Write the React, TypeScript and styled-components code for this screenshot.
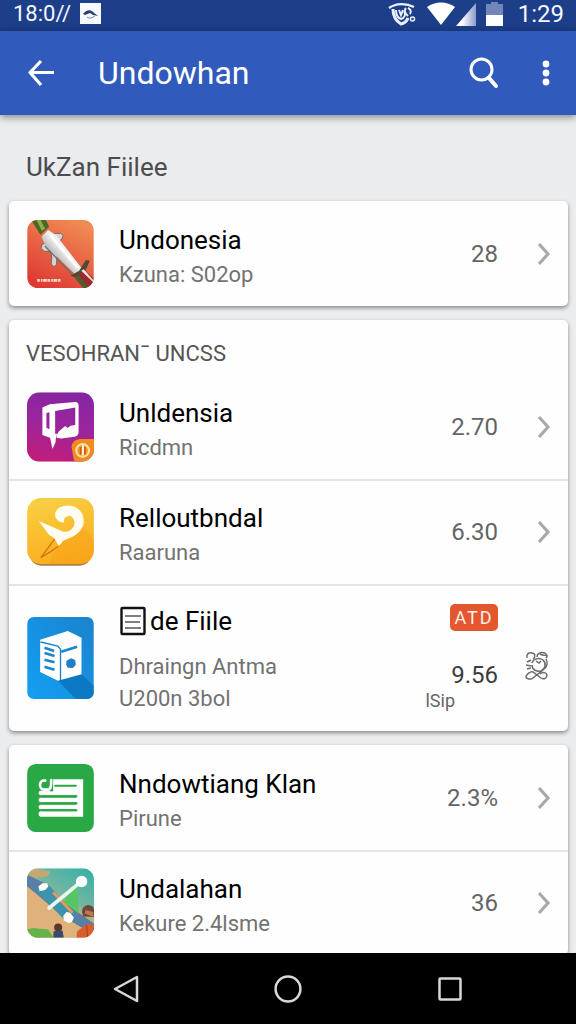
import React from 'react';
import styled, { createGlobalStyle } from 'styled-components';

const GlobalStyle = createGlobalStyle`
  * { box-sizing: border-box; }
  body { margin: 0; background: #ebecee; font-family: Roboto, 'Liberation Sans', sans-serif; }
  h1, h2, h3, p, ul { margin: 0; padding: 0; font-weight: 400; }
  ul { list-style: none; }
  svg { display: block; flex: none; }
`;

const Screen = styled.div`
  height: 100vh;
  display: flex;
  flex-direction: column;
  background: #ebecee;
`;

const StatusBar = styled.div`
  flex: none;
  height: 31px;
  padding: 0 12px 4px 13px;
  display: flex;
  align-items: center;
  justify-content: space-between;
  background: #1d3f8a;
  color: #f4f7ff;
  font-size: 24px;
  line-height: 26px;
`;

const StatusGroup = styled.div<{ $gap: number }>`
  display: flex;
  align-items: center;
  gap: ${(p) => p.$gap}px;
`;

const Elapsed = styled.span`
  font-size: 22px;
`;

const AppBar = styled.header`
  flex: none;
  position: relative;
  z-index: 1;
  height: 84px;
  padding: 0 16px 0 20px;
  display: flex;
  align-items: center;
  background: #305abb;
  color: #fff;
  box-shadow: 0 2px 8px rgba(0, 0, 0, 0.45);
`;

const IconButton = styled.button<{ $width: number }>`
  width: ${(p) => p.$width}px;
  height: 48px;
  padding: 0;
  border: 0;
  background: none;
  color: inherit;
  display: flex;
  align-items: center;
  justify-content: center;
  cursor: pointer;
`;

const AppTitle = styled.h1`
  flex: 1;
  padding-left: 36px;
  font-size: 32px;
  line-height: 40px;
`;

const Actions = styled.div`
  display: flex;
  gap: 24px;
`;

const Content = styled.main`
  flex: 1;
  min-height: 0;
  overflow-y: auto;
  scrollbar-width: none;
  padding: 32px 8px 0 9px;
`;

const SectionTitle = styled.h2`
  padding: 0 17px;
  margin-bottom: 14px;
  color: #4b4c4e;
  font-size: 26px;
  line-height: 40px;
`;

const Card = styled.section`
  margin-bottom: 14px;
  border-radius: 5px;
  background: #fefefe;
  box-shadow: 0 2px 4px rgba(0, 0, 0, 0.42);
`;

const CardHeading = styled.h3`
  padding: 16px 17px 0;
  height: 54px;
  color: #555;
  font-size: 22px;
  line-height: 36px;
`;

const Item = styled.li`
  & + & { box-shadow: inset 0 2px #e4e4e5; }
`;

const Row = styled.a<{ $tall?: boolean }>`
  min-height: ${(p) => (p.$tall ? 147 : 105)}px;
  padding: 0 17px 0 18px;
  display: flex;
  align-items: center;
  color: inherit;
  text-decoration: none;
`;

const Labels = styled.div<{ $tall?: boolean }>`
  flex: 1;
  min-width: 0;
  padding-top: ${(p) => (p.$tall ? 2 : 6)}px;
  padding-left: 25px;
`;

const Title = styled.p<{ $tall?: boolean }>`
  display: flex;
  align-items: center;
  gap: 3px;
  margin-bottom: ${(p) => (p.$tall ? 12 : 0)}px;
  color: #000;
  font-size: 26px;
  line-height: 36px;
  white-space: nowrap;
`;

const Subtitle = styled.p<{ $tall?: boolean }>`
  color: #727272;
  font-size: 22px;
  line-height: ${(p) => (p.$tall ? 32 : 34)}px;
  white-space: nowrap;
`;

const Value = styled.span<{ $dark?: boolean }>`
  color: ${(p) => (p.$dark ? '#3c3c3c' : '#646464')};
  font-size: 24px;
  line-height: 32px;
`;

const Trailing = styled.span<{ $tall?: boolean }>`
  width: 53px;
  padding-top: ${(p) => (p.$tall ? 16 : 0)}px;
  padding-right: ${(p) => (p.$tall ? 2 : 0)}px;
  display: flex;
  justify-content: flex-end;
`;

const Details = styled.div`
  align-self: stretch;
  padding-top: 20px;
  display: flex;
  flex-direction: column;
  align-items: flex-end;
`;

const Badge = styled.span`
  width: 48px;
  margin-bottom: 28px;
  border-radius: 5px;
  background: #e4572e;
  color: #fff0e8;
  font-size: 18px;
  line-height: 27px;
  letter-spacing: 2px;
  text-align: center;
`;

const Note = styled.span`
  padding-right: 43px;
  color: #666;
  font-size: 18px;
  line-height: 20px;
`;

const NavBar = styled.nav`
  flex: none;
  height: 71px;
  padding: 0 45px;
  display: flex;
  align-items: center;
  background: #000;
  color: #d8d8d8;
`;

const NavButton = styled(IconButton)`
  flex: 1;
`;

const PhotoIcon = () => (
  <svg width="21" height="21" viewBox="0 0 21 21">
    <path fill="#f6f9ff" d="M0 0h21v21H0z" />
    <path fill="#28406f" d="M3 11c3-4 7-5 10-2l5 4-5-1-3-2-5 2z" />
    <path fill="none" stroke="#7585a8" d="M7 14c3 2 5 1 8-1" />
  </svg>
);

const EyeIcon = () => (
  <svg width="28" height="24" viewBox="0 0 28 24" fill="none" stroke="#eaf0ff">
    <path strokeWidth="2.400" d="M1 6C8 1 18 1 26 5" />
    <path strokeWidth="3" d="M5 7c0 7 3 12 8 15 4-1 6-3 7-6" />
    <path strokeWidth="2" d="M8 8c0 5 2 8 5 9 4-1 5-5 3-8M11 8l2 5 2-5M18 6c-3 3 0 6 2 8M20 6c2 1 4 3 2 6" />
    <circle cx="24.500" cy="17" r="2" strokeWidth="1.500" />
  </svg>
);

const WifiIcon = () => (
  <svg width="30" height="24" viewBox="0 0 30 24">
    <path fill="#fff" d="M1 5C9-1 21-1 29 5L15 23z" />
  </svg>
);

const SignalIcon = () => (
  <svg width="20" height="24" viewBox="0 0 20 24">
    <defs>
      <linearGradient id="signal">
        <stop offset=".3" stopColor="#fff" />
        <stop offset="1" stopColor="#8c9cc8" />
      </linearGradient>
    </defs>
    <path fill="url(#signal)" d="M0 24L20 1v23z" />
  </svg>
);

const BatteryIcon = () => (
  <svg width="17" height="24" viewBox="0 0 17 24">
    <path fill="#7386ba" d="M5 0h7v2h5v11H0V2h5z" />
    <path fill="#fff" d="M0 13h17v11H0z" />
  </svg>
);

const BackArrow = () => (
  <svg width="28" height="28" viewBox="0 0 28 28" fill="none" stroke="currentColor" strokeWidth="3.200">
    <path d="M27 13.500H3M14 2L3 13.500 14 26" strokeLinejoin="round" />
  </svg>
);

const SearchIcon = () => (
  <svg width="30" height="32" viewBox="0 0 30 32" fill="none" stroke="currentColor">
    <circle cx="12.500" cy="12.500" r="10.500" strokeWidth="3" />
    <path strokeWidth="4" strokeLinecap="round" d="M20 21l7 8" />
  </svg>
);

const MoreIcon = () => (
  <svg width="8" height="26" viewBox="0 0 8 26" fill="currentColor">
    <circle cx="4" cy="4" r="3.400" />
    <circle cx="4" cy="13" r="3.400" />
    <circle cx="4" cy="22" r="3.400" />
  </svg>
);

const Chevron = () => (
  <svg width="14" height="24" viewBox="0 0 14 24" fill="none" stroke="#a9a9a9" strokeWidth="3.200">
    <path d="M2 2l9 10-9 10" />
  </svg>
);

const KnotIcon = () => (
  <svg width="25" height="32" viewBox="0 0 25 32" fill="none" stroke="#6a6a6a" strokeWidth="1.500">
    <path d="M8 13c1-4 7-6 11-3 4 4 2 9-2 11-4 1-9-1-9-6" />
    <path d="M3 8c-1-4 2-6 5-5 3 0 4 4 1 6M13 7c0-4 4-5 8-4 3 2 2 4 1 5M15 3c2 2 4 3 7 2M3 12l4-2M2 15l5 1M3 19l4-1M12 11l3 2 2-2M22 9c2 4 1 8-2 10" />
    <path d="M19 20L9 28c-2 2-7 1-7-1 0-2 4-6 7-5l8 6c3 2 6 0 6-3-1-3-4-3-7-1" />
  </svg>
);

const PageIcon = () => (
  <svg width="28" height="30" viewBox="0 0 28 30" fill="none" stroke="#111">
    <rect x="2.500" y="2" width="23" height="26" rx="1" strokeWidth="2.400" />
    <path stroke="#555" strokeWidth="1.600" d="M6 10h16M6 16h15M6 22h16" />
  </svg>
);

const RocketApp = () => (
  <svg width="67" height="68" viewBox="0 0 200 204">
    <defs>
      <linearGradient id="ra" x1="0.700" y1="0" x2="0.200" y2="1">
        <stop offset="0" stopColor="#f08a52" />
        <stop offset="1" stopColor="#df3733" />
      </linearGradient>
      <linearGradient id="rb" x1="0" y1="1" x2="1" y2="0">
        <stop offset=".3" stopColor="#a5a4a5" />
        <stop offset=".55" stopColor="#f1f1f1" />
      </linearGradient>
      <clipPath id="rc"><rect width="200" height="204" rx="32" /></clipPath>
    </defs>
    <g clipPath="url(#rc)">
      <path fill="url(#ra)" d="M0 0h200v204H0z" />
      <path fill="#4b6726" d="M12 0h44l10 20-26 24z" />
      <path fill="#8fae4a" d="M28 0h12l14 26-10 6z" />
      <path fill="#d5d4d1" stroke="#77665f" strokeWidth="3" d="M74 46l12-6h14l8 6-4 12-16 8zM60 66l-16 8-2 12 10 8h18l4 18-2 20 8 8 8-6 2-40z" />
      <path fill="url(#rb)" d="M43 50l20-20 24 16 78 100-18 20-92-88z" />
      <path fill="none" stroke="#fff" strokeWidth="8" d="M70 46l82 98" />
      <path fill="none" stroke="#6f6d70" strokeWidth="4" d="M53 78l84 88" />
      <path fill="#4c4a36" d="M130 167l26-15 20-32 12 2-14 32-30 18z" />
      <path fill="#a02730" d="M153 164l21-13 26 25v28h-20z" />
      <path fill="#505d2a" d="M142 173l12-9 34 40h-20z" />
      <path fill="#e9e4df" d="M162 152l8-4 30 34v6z" />
      <path fill="none" stroke="#ffd8c6" strokeWidth="8" strokeDasharray="8 3 5 2 11 2" d="M30 181h73" />
    </g>
  </svg>
);

const SignApp = () => (
  <svg width="67" height="70" viewBox="0 0 200 208">
    <defs>
      <linearGradient id="sa" x1="0.600" y1="0" x2="0.400" y2="1">
        <stop offset="0" stopColor="#8526a2" />
        <stop offset=".5" stopColor="#9d259b" />
        <stop offset="1" stopColor="#c01d7a" />
      </linearGradient>
      <clipPath id="sc"><rect width="200" height="208" rx="38" /></clipPath>
    </defs>
    <g clipPath="url(#sc)">
      <path fill="url(#sa)" d="M0 0h200v208H0z" />
      <path fill="#fff" fillRule="evenodd" d="M46 46l22-10 76-7q10 1 10 10v82q-2 10-12 12l-40 5-14-2V122l-3 28-9 20-7-34-23-8zM84 56v68h8l2-6 20-17 7 6 9-7 14-2V46zM58 62v44l9 5V60z" />
      <path fill="#f28a22" d="M133 164q2-22 26-24h41v68h-53q-8-2-9-16z" />
      <ellipse cx="166" cy="174" rx="19" ry="19" fill="#ef9a34" stroke="#ffe2a2" strokeWidth="6" />
      <path stroke="#d2571f" strokeWidth="5" d="M160 164v22M173 164v22" />
      <path stroke="#fff0c8" strokeWidth="6" d="M167 158v30" />
    </g>
  </svg>
);

const HornApp = () => (
  <svg width="67" height="68" viewBox="0 0 200 204">
    <defs>
      <linearGradient id="ha" x1="0.300" y1="0" x2="0.600" y2="1">
        <stop offset="0" stopColor="#f8cf43" />
        <stop offset="1" stopColor="#fbac1c" />
      </linearGradient>
    </defs>
    <rect x="8" y="30" width="184" height="173" rx="34" fill="#a98242" />
    <rect width="200" height="198" rx="42" fill="url(#ha)" />
    <path fill="#f79e16" d="M94 143l73-56 33 36v36q-2 34-36 39H62z" opacity=".4" />
    <path fill="none" stroke="#d67413" strokeWidth="4" d="M83 122l-24 33-18 24 31-19 22-16" />
    <path fill="#fffdf2" d="M35 69l62 27q22 12 36-2 14-14 7-28-6-16-22-10-12 6-6 18-18 0-26-14-8-20 12-32 20-10 44-2 28 12 28 46-2 28-34 44l-28 12-13 16-14-24-16-10z" />
  </svg>
);

const BoxApp = () => (
  <svg width="67" height="82" viewBox="0 0 200 246">
    <defs>
      <linearGradient id="ba" x1="0" y1="1" x2="1" y2="0">
        <stop offset="0" stopColor="#12a0f4" />
        <stop offset="1" stopColor="#1b82cc" />
      </linearGradient>
      <clipPath id="bc"><rect width="200" height="246" rx="20" /></clipPath>
    </defs>
    <g clipPath="url(#bc)">
      <path fill="url(#ba)" d="M0 0h200v246H0z" />
      <path fill="#0870b9" d="M91 190l72-18 37 34v40h-54z" opacity=".75" />
    </g>
    <path fill="#fff" d="M39 68l83-26 41 20v110l-71 19-53-26z" />
    <path fill="none" stroke="#1682cc" strokeWidth="4" d="M40 75l52 12 8 10v92" />
    <path fill="none" stroke="#1c86cd" strokeWidth="8" d="M52 92l29 10M52 108l30 9M52 128l30 8M52 149l30 9M102 104l48-15" />
    <path fill="#1d7fc7" d="M118 131l14-7 12 5 2 14-9 10-15-1-5-9z" />
  </svg>
);

const ScrollApp = () => (
  <svg width="67" height="68" viewBox="0 0 200 204">
    <rect width="200" height="204" rx="26" fill="#29a845" />
    <path fill="#fff" d="M76 46h92v112H40q-6-1-6-8t6-8h108v-6H40q-6-1-6-7t6-7h108v-7H40q-6-1-6-7t6-7h108v-7H40q-6-1-6-7t6-7h36z" />
    <path fill="none" stroke="#29a845" strokeWidth="6" strokeLinecap="round" d="M84 65h62M44 97h104M44 118h104M44 139h104" />
    <path fill="#29a845" d="M68 46h10v36H68z" />
    <path fill="none" stroke="#fff" strokeWidth="8" strokeLinecap="round" d="M54 50c-20-4-20 25-4 27h14c7-2 9-10 8-29" />
  </svg>
);

const GameApp = () => (
  <svg width="67" height="70" viewBox="0 0 200 208">
    <defs>
      <linearGradient id="ga" x1="0.900" y1="0" x2="0.300" y2="1">
        <stop offset="0" stopColor="#35b1a7" />
        <stop offset=".45" stopColor="#79b6a0" />
        <stop offset=".55" stopColor="#dfac76" />
        <stop offset="1" stopColor="#e9a852" />
      </linearGradient>
      <clipPath id="gc"><rect width="200" height="208" rx="34" /></clipPath>
    </defs>
    <g clipPath="url(#gc)">
      <path fill="url(#ga)" d="M0 0h200v208H0z" />
      <path fill="#c4a873" d="M0 0h20l50 10-8 14-36 6L0 20z" />
      <path fill="#dfb27b" d="M0 45l30 28 90 80 50 25-20 30H0z" />
      <path fill="#577fa7" d="M0 20l54 25 60 60 86 60v25l-40-14-60-38L28 77 0 54z" />
      <path fill="#3f92ac" d="M26 66l36-19 82 88-26 26z" />
      <path fill="#55c760" d="M151 49l3 87-45-37z" />
      <path stroke="#e89b54" strokeWidth="8" d="M78 72l58 61" />
      <path stroke="#e7f7f1" strokeWidth="11" strokeLinecap="round" d="M66 119l91-75" />
      <circle cx="163" cy="40" r="17" fill="#fff" />
      <path fill="#fff" d="M34 55l12-10h14l4 10-10 10-16 4zM108 143l10-12 10 2 12 14-6 14-10 3-14-8z" />
      <path fill="#62b34a" d="M0 184q17-8 31-4l32 3 17 25H0z" />
      <circle cx="93" cy="177" r="12" fill="#5d352d" />
      <path fill="#374c6a" d="M79 188l27-2 4 22H79z" />
      <path fill="#70483a" d="M164 130q2-18 18-20 18 2 18 14v22l-32-2z" />
      <path fill="#bd7a50" d="M174 125l24 6v14l-25-9z" />
      <path fill="#d95e2d" d="M149 190l28-23 23 2v39h-52z" />
      <path stroke="#9f422b" strokeWidth="3" d="M178 168l3 40" />
    </g>
  </svg>
);

interface AppRowProps {
  icon: React.ReactNode;
  title: string;
  subtitle: string;
  value: string;
}

const AppRow = ({ icon, title, subtitle, value }: AppRowProps) => (
  <Item>
    <Row href="#">
      {icon}
      <Labels>
        <Title>{title}</Title>
        <Subtitle>{subtitle}</Subtitle>
      </Labels>
      <Value>{value}</Value>
      <Trailing><Chevron /></Trailing>
    </Row>
  </Item>
);

export default function App() {
  return (
    <Screen>
      <GlobalStyle />
      <StatusBar>
        <StatusGroup $gap={9}>
          <Elapsed>18:0//</Elapsed>
          <PhotoIcon />
        </StatusGroup>
        <StatusGroup $gap={15}>
          <StatusGroup $gap={10}>
            <EyeIcon />
            <StatusGroup $gap={0}>
              <WifiIcon />
              <SignalIcon />
            </StatusGroup>
            <BatteryIcon />
          </StatusGroup>
          <span>1:29</span>
        </StatusGroup>
      </StatusBar>
      <AppBar>
        <IconButton $width={42} aria-label="Back"><BackArrow /></IconButton>
        <AppTitle>Undowhan</AppTitle>
        <Actions>
          <IconButton $width={48} aria-label="Search"><SearchIcon /></IconButton>
          <IconButton $width={28} aria-label="More options"><MoreIcon /></IconButton>
        </Actions>
      </AppBar>
      <Content>
        <SectionTitle>UkZan Fiilee</SectionTitle>
        <Card>
          <ul>
            <AppRow icon={<RocketApp />} title="Undonesia" subtitle="Kzuna: S02op" value="28" />
          </ul>
        </Card>
        <Card>
          <CardHeading>VESOHRANˉ UNCSS</CardHeading>
          <ul>
            <AppRow icon={<SignApp />} title="Unldensia" subtitle="Ricdmn" value="2.70" />
            <AppRow icon={<HornApp />} title="Relloutbndal" subtitle="Raaruna" value="6.30" />
            <Item>
              <Row href="#" $tall>
                <BoxApp />
                <Labels $tall>
                  <Title $tall><PageIcon />de Fiile</Title>
                  <Subtitle $tall>Dhraingn Antma</Subtitle>
                  <Subtitle $tall>U200n 3bol</Subtitle>
                </Labels>
                <Details>
                  <Badge>ATD</Badge>
                  <Value $dark>9.56</Value>
                  <Note>lSip</Note>
                </Details>
                <Trailing $tall><KnotIcon /></Trailing>
              </Row>
            </Item>
          </ul>
        </Card>
        <Card>
          <ul>
            <AppRow icon={<ScrollApp />} title="Nndowtiang Klan" subtitle="Pirune" value="2.3%" />
            <AppRow icon={<GameApp />} title="Undalahan" subtitle="Kekure 2.4lsme" value="36" />
          </ul>
        </Card>
      </Content>
      <NavBar>
        <NavButton $width={48} aria-label="Back">
          <svg width="26" height="28" viewBox="0 0 26 28" fill="none" stroke="currentColor" strokeWidth="2.500">
            <path strokeLinejoin="round" d="M2 14L24 2v24z" />
          </svg>
        </NavButton>
        <NavButton $width={48} aria-label="Home">
          <svg width="28" height="28" viewBox="0 0 28 28" fill="none" stroke="currentColor" strokeWidth="2.500">
            <circle cx="14" cy="14" r="12.400" />
          </svg>
        </NavButton>
        <NavButton $width={48} aria-label="Recent apps">
          <svg width="26" height="26" viewBox="0 0 26 26" fill="none" stroke="currentColor" strokeWidth="2.500">
            <rect x="2.500" y="2.500" width="21" height="21" rx="1" />
          </svg>
        </NavButton>
      </NavBar>
    </Screen>
  );
}
